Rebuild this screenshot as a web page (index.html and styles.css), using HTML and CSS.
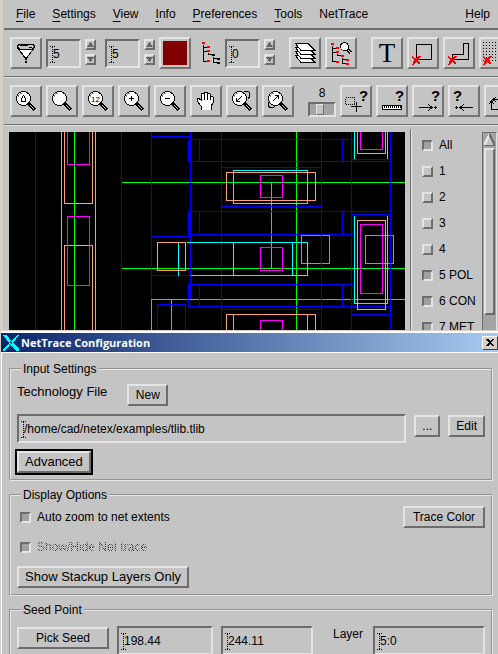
FILE: index.html
```html
<!DOCTYPE html>
<html lang="en">
<head>
<meta charset="utf-8">
<title>NetTrace Configuration</title>
<link rel="stylesheet" href="styles.css">
</head>
<body>
<svg class="defs" aria-hidden="true">
  <symbol id="lens" viewBox="3 3 26 26">
    <path d="M18 18L25 25" stroke="#000" stroke-width="3"/>
    <path d="M20 20L24 24" stroke="#c4c4c4" stroke-width="1"/>
    <circle cx="13.5" cy="13.5" r="7" fill="#fff" stroke="#000" stroke-width="1"/>
    <path d="M8.500 12V10.500L10.500 8.500H12" fill="none" stroke="#888"/>
  </symbol>
  <symbol id="cross" viewBox="0 0 9 9">
    <path d="M0 1L3 3L8 8M8 0L5 3L3 6L1 9M1 7L3 5" fill="none" stroke="#f00" stroke-width="1.5"/>
  </symbol>
</svg>
<div class="app">
  <nav class="menubar">
    <a href="#"><u>F</u>ile</a>
    <a href="#"><u>S</u>ettings</a>
    <a href="#"><u>V</u>iew</a>
    <a href="#"><u>I</u>nfo</a>
    <a href="#"><u>P</u>references</a>
    <a href="#"><u>T</u>ools</a>
    <a href="#">NetTrace</a>
    <a href="#" class="help"><u>H</u>elp</a>
  </nav>

  <div class="toolbar">
    <button class="tool" aria-label="Filter"><svg viewBox="3 3 26 26"><path d="M7 10L16 22L25 10" fill="#fff" stroke="#000"/><path d="M7 9L10 7H22L25 9L22 12H10Z" fill="#c4c4c4" stroke="#000"/><path d="M10 8L15 9L20 7M19 10H22" fill="none" stroke="#000"/><path d="M16 21V26" stroke="#000" stroke-width="2" stroke-dasharray="2 1"/></svg></button>
    <span class="field small"><input type="text" value="5" aria-label="Start depth"></span>
    <span class="spin"><button aria-label="Increase start"><svg viewBox="0 0 7 7"><path d="M0 6L3.500 1L7 6Z" fill="#666"/></svg></button><button aria-label="Decrease start"><svg viewBox="0 0 7 7"><path d="M0 1H7L3.500 6Z" fill="#666"/></svg></button></span>
    <span class="field small second"><input type="text" value="5" aria-label="End depth"></span>
    <span class="spin"><button aria-label="Increase end"><svg viewBox="0 0 7 7"><path d="M0 6L3.500 1L7 6Z" fill="#666"/></svg></button><button aria-label="Decrease end"><svg viewBox="0 0 7 7"><path d="M0 1H7L3.500 6Z" fill="#666"/></svg></button></span>
    <button class="tool" aria-label="Color"><span class="swatch"></span></button>
    <svg class="tree" viewBox="0 0 20 24"><path d="M2 4h1v16h3v1H2zM3 6h3v1H3zM3 10h3v1H3zM7 12h1v1h3v1H7zM12 16h1v5h3v1h-4zM13 17h3v1h-3zM11 13h3v2h-3zM16 17h3v2h-3zM16 21h3v2h-3z"/><path fill="#f00" d="M1 1h3v2H1zM6 5h3v2H6zM6 9h3v2H6zM6 19h3v2H6z"/></svg>
    <span class="field small"><input type="text" value="0" aria-label="Hierarchy level"></span>
    <span class="spin"><button aria-label="Increase level"><svg viewBox="0 0 7 7"><path d="M0 6L3.500 1L7 6Z" fill="#666"/></svg></button><button aria-label="Decrease level"><svg viewBox="0 0 7 7"><path d="M0 1H7L3.500 6Z" fill="#666"/></svg></button></span>
    <button class="tool spaced" aria-label="Layers"><svg viewBox="3 3 26 26"><g fill="#fff" stroke="#000"><path d="M6.500 18.500H19L26 25.500H12Z"/><path d="M6.500 14.500H19L26 21.500H12Z"/><path d="M6.500 10.500H19L26 17.500H12Z"/><path d="M6.500 6.500H19L26 13.500H12Z"/></g></svg></button>
    <button class="tool" aria-label="Find in hierarchy"><svg viewBox="3 3 26 26"><path d="M7 9h1v15h3v1H7zM8 11h3v1H8zM8 15h3v1H8zM12 17h1v1h3v1h-4zM17 21h1v5h3v1h-4zM18 22h3v1h-3z"/><path fill="#f00" d="M6 6h3v2H6zM11 10h3v2h-3zM11 14h3v2h-3zM16 18h3v2h-3zM11 24h3v2h-3zM21 22h3v2h-3zM21 26h3v2h-3z"/><path d="M22 12L26 16" stroke="#000" stroke-width="3"/><path d="M23 13L26 16" stroke="#fff"/><circle cx="19.500" cy="9.500" r="4" fill="#fff" stroke="#000"/></svg></button>
    <button class="tool spaced letter" aria-label="Text">T</button>
    <button class="tool" aria-label="Delete box"><svg viewBox="3 3 26 26"><rect x="9.500" y="7.500" width="15" height="15" fill="none" stroke="#000"/><use href="#cross" x="5" y="19" width="9" height="9"/></svg></button>
    <button class="tool" aria-label="Delete path"><svg viewBox="3 3 26 26"><path d="M20.500 6.500H25.500V22.500H9.500V17.500H20.500Z" fill="none" stroke="#000"/><use href="#cross" x="5" y="19" width="9" height="9"/></svg></button>
    <button class="tool" aria-label="Clear grid"><svg viewBox="3 3 26 26"><path d="M4 5.500H28M4 8.500H28M4 11.500H28M4 14.500H28M4 17.500H28M4 20.500H28M4 23.500H28" stroke="#000" stroke-dasharray="1 2"/><use href="#cross" x="4" y="19" width="9" height="9"/></svg></button>
  </div>

  <div class="toolbar">
    <button class="tool" aria-label="Zoom home"><svg viewBox="3 3 26 26"><use href="#lens" x="3" y="3" width="26" height="26"/><path d="M11.500 16.500V13.500L13.500 10.500L15.500 13.500V16.500Z" fill="none" stroke="#000"/></svg></button>
    <button class="tool" aria-label="Zoom window"><svg viewBox="3 3 26 26"><use href="#lens" x="3" y="3" width="26" height="26"/></svg></button>
    <button class="tool" aria-label="Zoom one half"><svg viewBox="3 3 26 26"><use href="#lens" x="3" y="3" width="26" height="26"/><text x="9" y="17" class="mini">12</text></svg></button>
    <button class="tool" aria-label="Zoom in"><svg viewBox="3 3 26 26"><use href="#lens" x="3" y="3" width="26" height="26"/><path d="M11 13.500H16M13.500 11V16" stroke="#000"/></svg></button>
    <button class="tool" aria-label="Zoom out"><svg viewBox="3 3 26 26"><use href="#lens" x="3" y="3" width="26" height="26"/><path d="M11 13.500H16" stroke="#000"/></svg></button>
    <button class="tool" aria-label="Pan"><svg viewBox="3 3 26 26"><path d="M11 24V21L7 16V14L8 13L11 15V9L12 8L14 9V7H17V9L19 8L20 9V11L22 11L23 12V18L21 21V24Z" fill="#fff" stroke="#000"/><path d="M14.500 8V15M17.500 8V15M20.500 10V15" stroke="#000"/><path d="M12 24H21" stroke="#fff" stroke-width="2"/></svg></button>
    <button class="tool" aria-label="Zoom previous"><svg viewBox="3 3 26 26"><use href="#lens" x="3" y="3" width="26" height="26"/><path d="M10 17L16 11M10.500 17V13M10 16.500H14" fill="none" stroke="#000"/><path d="M16 8L20 6L23 7L24 11L22 14" fill="none" stroke="#000"/></svg></button>
    <button class="tool" aria-label="Zoom next"><svg viewBox="3 3 26 26"><use href="#lens" x="3" y="3" width="26" height="26"/><path d="M11 16L17 10M16.500 10V14M17 10.500H13" fill="none" stroke="#000"/><path d="M7 17L6 20L8 23L12 22L14 20" fill="none" stroke="#000"/></svg></button>
    <label class="scale"><output>8</output><input type="range" min="0" max="20" value="8"></label>
    <button class="tool" aria-label="Query region"><svg viewBox="3 3 26 26"><text x="19" y="16" class="query">?</text><rect x="5.500" y="12.500" width="9" height="7" fill="none" stroke="#000" stroke-dasharray="1 1"/><path d="M16.500 17V27M11 21.500H22" stroke="#000"/></svg></button>
    <button class="tool" aria-label="Measure"><svg viewBox="3 3 26 26"><text x="19" y="16" class="query">?</text><rect x="6.500" y="20.500" width="19" height="4" fill="#fff" stroke="#000"/><path d="M8 22H25" stroke="#000" stroke-width="2" stroke-dasharray="1 1"/></svg></button>
    <button class="tool" aria-label="Query next"><svg viewBox="3 3 26 26"><text x="19" y="16" class="query">?</text><path d="M7 22.500H20M22 22.500H25M23.500 21V24M16 19L20 22.500L16 26" fill="none" stroke="#000"/></svg></button>
    <button class="tool" aria-label="Query previous"><svg viewBox="3 3 26 26"><text x="5" y="16" class="query">?</text><path d="M12 22.500H25M7 22.500H10M8.500 21V24M16 19L12 22.500L16 26" fill="none" stroke="#000"/></svg></button>
    <button class="tool" aria-label="Rotate"><svg viewBox="3 3 26 26"><path d="M9 14.500H24.500V22M7.500 16V24.500H22M12 12L9 14.500L12 17M5 19L7.500 16L10 19" fill="none" stroke="#000"/></svg></button>
  </div>

  <main class="workspace">
    <svg class="layout" viewBox="8.5 131.5 396 198" preserveAspectRatio="xMinYMin slice" role="img" aria-label="Layout view">
      <g class="cyan"><path d="M61 130V332M95 130V332"/></g>
      <g class="green"><path d="M74 130V332M121 182H406M121 268H406M151 332V299H406M171 299V332M296 130V332M271 182V268"/><rect x="301" y="235" width="28" height="28"/><rect x="365" y="235" width="28" height="28"/></g>
      <g class="blue">
        <path d="M35 130V332M121 130V332M151 130V298M190 130V298M221 130V332M321 130V332M351 130V332M390 130V332M151 136H190M151 236H190M151 275H190M157 332V304H185V332"/>
        <path d="M188 139H353V161M188 139V161H390M199 139V161M342 139V161M188 234V211H390M188 234H353V211M199 211V234M342 211V234M188 306V284H353V306M188 306H390M199 284V306M342 284V306"/>
        <path d="M221 167H321M221 206H321M221 309H321M351 159H390M351 214H390M351 314H390"/>
      </g>
      <g class="cyan"><path d="M186 242H307V275H190M178 242V275M233 242V275M292 242V275M233 314V332M307 314V332M354 130V158M387 130V158M354 215V303H387V215"/><rect x="233" y="170" width="74" height="33"/></g>
      <g class="salmon"><path d="M64 130V203H92V130M64 332V245H92V332M226 332V314H315V332M357 130V153H385V130"/><rect x="157" y="242" width="28" height="28"/><rect x="226" y="172" width="89" height="28"/><rect x="357" y="220" width="28" height="89"/></g>
      <g class="magenta"><path d="M67 130V164H89V130M260 332V320H282V332M360 130V149H382V130"/><rect x="67" y="216" width="22" height="69"/><rect x="260" y="175" width="22" height="22"/><rect x="260" y="247" width="22" height="23"/><rect x="360" y="224" width="22" height="69"/></g>
    </svg>
    <div class="layers">
      <div class="layer-list">
        <label><input type="checkbox" checked>All</label>
        <label><input type="checkbox">1</label>
        <label><input type="checkbox">2</label>
        <label><input type="checkbox">3</label>
        <label><input type="checkbox">4</label>
        <label><input type="checkbox" checked>5 POL</label>
        <label><input type="checkbox" checked>6 CON</label>
        <label><input type="checkbox" checked>7 MET</label>
      </div>
      <div class="scrollbar">
        <svg viewBox="0 0 12 12"><path d="M6 0L12 12H0Z" fill="#c4c4c4"/><path d="M6 0L0 12" stroke="#eee" stroke-width="2"/><path d="M6 0L12 12H0" fill="none" stroke="#6c6c6c" stroke-width="2"/></svg>
        <div class="thumb"></div>
      </div>
    </div>
  </main>
</div>

<section class="dialog">
  <header class="titlebar">
    <svg class="logo" viewBox="0 0 16 16"><path d="M0 0H4L8 6L14 0H16L10 8L16 14V16H13L7 10L2 16H0V14L6 8Z" fill="#0ff"/><path d="M7 6L9 9M6 9L8 11" stroke="#0a246a" stroke-width="1"/></svg>
    <h1>NetTrace Configuration</h1>
    <button class="close" aria-label="Close"><svg viewBox="0 0 8 7"><path d="M0 0h2l2 2l2-2h2L5 3.500L8 7H6L4 5L2 7H0L3 3.500Z"/></svg></button>
  </header>
  <form class="panel">
    <fieldset class="inputs">
      <legend>Input Settings</legend>
      <div class="row">
        <label for="tech" class="large">Technology File</label>
        <button type="button" class="btn new">New</button>
      </div>
      <div class="row file">
        <span class="field grow"><input id="tech" type="text" value="/home/cad/netex/examples/tlib.tlib"></span>
        <button type="button" class="btn">...</button>
        <button type="button" class="btn">Edit</button>
      </div>
      <button type="button" class="btn large default">Advanced</button>
    </fieldset>
    <fieldset class="display">
      <legend>Display Options</legend>
      <div class="row">
        <label class="check"><input type="checkbox" checked>Auto zoom to net extents</label>
        <button type="button" class="btn trace">Trace Color</button>
      </div>
      <div class="row">
        <label class="check"><input type="checkbox" checked disabled><span>Show/Hide Net trace</span></label>
      </div>
      <div class="row"><button type="button" class="btn large">Show Stackup Layers Only</button></div>
    </fieldset>
    <fieldset class="seed">
      <legend>Seed Point</legend>
      <div class="row seed-row">
        <button type="button" class="btn">Pick Seed</button>
        <span class="field"><input type="text" value="198.44" aria-label="Seed X"></span>
        <span class="field"><input type="text" value="244.11" aria-label="Seed Y"></span>
        <label for="layer">Layer</label>
        <span class="field"><input id="layer" type="text" value="5:0"></span>
      </div>
    </fieldset>
  </form>
</section>
</body>
</html>
```
FILE: styles.css
```css
:root {
  --face: #c4c4c4;
  --light: #e4e4e4;
  --dark: #6c6c6c;
  --frame: #d4d0c8;
}
* { box-sizing: border-box; }
html { height: 100%; overflow: hidden; }
body {
  margin: 0;
  min-height: 100%;
  background: var(--face);
  color: #000;
  font: 12px/16px "Liberation Sans", Arial, sans-serif;
}
button, input { font: inherit; color: inherit; margin: 0; }
button {
  padding: 0;
  background: var(--face);
  border: 2px solid;
  border-color: var(--light) var(--dark) var(--dark) var(--light);
}
svg { display: block; shape-rendering: crispEdges; }
.defs { position: absolute; width: 0; height: 0; }

.app { border-left: 3px solid var(--frame); padding-left: 1px; }

.menubar {
  display: flex;
  gap: 17px;
  height: 30px;
  padding: 6px 8px 0 12px;
  border-bottom: 2px solid var(--dark);
}
.menubar a { color: inherit; text-decoration: none; }
.menubar u { text-underline-offset: 3px; text-decoration-thickness: 1px; }
.menubar .help { margin-left: auto; }

.toolbar {
  display: flex;
  gap: 4px;
  height: 48px;
  padding: 7px 0 0 6px;
  overflow: hidden;
  border-bottom: 1px solid var(--light);
  box-shadow: inset 0 -1px var(--dark);
}
.toolbar > * { flex: none; }
.tool { width: 32px; height: 32px; border-color: var(--light) #747474 #747474 var(--light); }
.tool svg { width: 26px; height: 26px; margin: 1px; }
.spaced { margin-left: 10px; }
.letter { font: 27px/28px "Liberation Serif", serif; }
.swatch { display: block; height: 24px; margin: 2px; background: #800000; }
.tree { width: 20px; height: 24px; margin: 4px 0 0 6px; }
.mini { font: 8px "Liberation Sans", sans-serif; }
.query { font: bold 15px "Liberation Sans", sans-serif; }

.field {
  position: relative;
  display: block;
  height: 29px;
  border: 2px solid;
  border-color: var(--dark) var(--light) var(--light) var(--dark);
}
.field::before {
  content: "";
  position: absolute;
  left: 2px;
  top: 5px;
  width: 5px;
  height: 15px;
  border: dotted #000;
  border-width: 1px 0;
  background: repeating-linear-gradient(#000 0 1px, transparent 1px 2px) 2px 0 / 1px 100% no-repeat;
}
.field input {
  display: block;
  width: 100%;
  height: 100%;
  padding: 0 0 0 5px;
  border: 0;
  outline: 0;
  background: transparent;
}
.small { width: 35px; margin-top: 2px; }
.second { margin-left: 5px; }
.spin { display: flex; flex-direction: column; gap: 4px; padding-top: 2px; width: 11px; }
.spin button { height: 11px; }
.spin svg { width: 7px; height: 7px; }

.scale { display: flex; flex-direction: column; width: 28px; margin: 0 0 0 10px; text-align: center; }
.scale input {
  appearance: none;
  width: 28px;
  height: 15px;
  margin-top: 1px;
  background: #a4a4a4;
  border: 2px solid;
  border-color: var(--dark) var(--light) var(--light) var(--dark);
}
.scale input::-webkit-slider-thumb {
  appearance: none;
  width: 8px;
  height: 11px;
  background: var(--face);
  border: 1px solid;
  border-color: var(--light) var(--dark) var(--dark) var(--light);
}

.workspace { display: flex; height: 204px; padding: 6px 0 0 5px; overflow: hidden; }
.layout { flex: 1; min-width: 0; height: 198px; background: #000; fill: none; }
.blue { stroke: #00f; }
.green { stroke: #0f0; }
.cyan { stroke: #0ff; }
.salmon { stroke: #ffa07a; }
.magenta { stroke: #f0f; }

.layers {
  display: flex;
  justify-content: space-between;
  width: 88px;
  margin: -3px 0 0 5px;
  padding: 3px 1px 0 11px;
  border-left: 1px solid var(--dark);
  box-shadow: inset 1px 0 var(--light);
}
.layer-list label { display: flex; align-items: center; gap: 6px; height: 26px; white-space: nowrap; }
input[type="checkbox"] {
  appearance: none;
  flex: none;
  width: 11px;
  height: 11px;
  margin: 0;
  border: 2px solid;
  border-color: var(--light) var(--dark) var(--dark) var(--light);
}
input[type="checkbox"]:checked {
  background: #a0a0a0;
  border-color: var(--dark) var(--light) var(--light) var(--dark);
}
.scrollbar {
  display: flex;
  flex-direction: column;
  gap: 2px;
  width: 15px;
  padding: 1px 1px 0;
  background: #a4a4a4;
  border: solid;
  border-width: 1px 1px 0;
  border-color: var(--dark) var(--light) var(--light) var(--dark);
}
.scrollbar svg { width: 11px; height: 12px; }
.thumb {
  height: 167px;
  background: var(--face);
  border: 2px solid;
  border-color: var(--light) var(--dark) var(--dark) var(--light);
}

.dialog {
  position: relative;
  border: solid var(--frame);
  border-width: 1px 0 0 1px;
  background: var(--face);
  box-shadow: inset 1px 1px #fff;
}
.titlebar {
  display: flex;
  align-items: center;
  gap: 2px;
  height: 22px;
  padding-left: 2px;
  border: solid #fff;
  border-width: 2px 0 1px;
  background: linear-gradient(90deg, #0a246a, #a6caf0);
}
.titlebar h1 { flex: 1; margin: 0; color: #fff; font: bold 11px/18px "Open Sans", sans-serif; }
.logo { width: 16px; height: 16px; }
.close {
  display: grid;
  place-items: center;
  width: 16px;
  height: 14px;
  background: var(--frame);
  border: 1px solid;
  border-color: #fff #404040 #404040 #fff;
}
.close svg { width: 8px; height: 7px; }

.panel { display: grid; gap: 6px; padding: 8px 5px 0 8px; }
fieldset {
  min-width: 0;
  margin: 0;
  padding: 0 6px;
  border: 2px groove #e8e8e8;
}
legend { height: 16px; margin-left: 4px; padding: 0 2px; }
.inputs { padding-top: 7px; padding-bottom: 4px; }
.display { padding-top: 3px; }
.seed { padding-top: 8px; padding-bottom: 8px; }
.row { display: flex; gap: 8px; margin-bottom: 8px; }
.display .row:last-child { margin-bottom: 6px; }
.btn { height: 22px; padding: 0 6px; white-space: nowrap; }
.large { font-size: 13px; }
.new { margin-left: 12px; min-width: 41px; }
.file { margin-bottom: 6px; }
.file .btn { margin-top: 1px; }
.grow { flex: 1; }
.default {
  display: block;
  height: 26px;
  margin-left: -2px;
  padding: 0 6px;
  outline: 2px solid #000;
  outline-offset: -2px;
  border-width: 4px;
  line-height: 18px;
}
.check { display: flex; align-items: center; gap: 6px; height: 22px; padding-left: 3px; }
.check input:disabled + span {
  color: transparent;
  background: repeating-conic-gradient(#222 0 25%, transparent 0 50%) 0 0 / 2px 2px;
  -webkit-background-clip: text;
  background-clip: text;
}
.trace { min-width: 82px; margin-left: auto; }
.seed-row { display: grid; grid-template-columns: 92fr 96fr 92fr 44fr 112fr; }
.seed-row .btn { margin-top: 1px; }
.seed-row label { padding-left: 12px; }
```
